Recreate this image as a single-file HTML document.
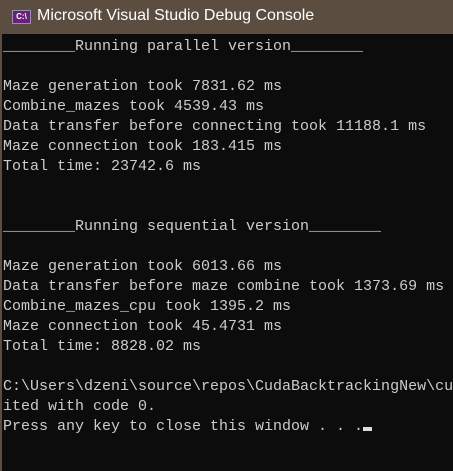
<!DOCTYPE html>
<html><head><style>
html,body{margin:0;padding:0;width:453px;height:471px;overflow:hidden;background:#0c0c0c}
.title{position:absolute;left:0;top:0;width:453px;height:34px;background:#5b4e41}
.title span{position:absolute;left:37px;top:7px;color:#fff;font:16px "Liberation Sans",sans-serif}
.icon{position:absolute;left:12px;top:10px;width:19px;height:14px;background:#68217a;border:1px solid #9b8fb0;box-sizing:border-box;color:#fff;font:bold 8px "Liberation Sans",sans-serif;text-align:center;line-height:12px}
.lb{position:absolute;left:0;top:34px;width:2px;height:437px;background:#5b4e41}
pre{position:absolute;left:3px;top:37px;margin:0;color:#cccccc;font:15px/20px "Liberation Mono",monospace;white-space:pre}
.cur{display:inline-block;width:9px;height:4px;background:#ddd;vertical-align:-1px}
</style></head><body>
<div class="title"><div class="icon">C:\</div><span>Microsoft Visual Studio Debug Console</span></div>
<div class="lb"></div>
<pre>________Running parallel version________

Maze generation took 7831.62 ms
Combine_mazes took 4539.43 ms
Data transfer before connecting took 11188.1 ms
Maze connection took 183.415 ms
Total time: 23742.6 ms


________Running sequential version________

Maze generation took 6013.66 ms
Data transfer before maze combine took 1373.69 ms
Combine_mazes_cpu took 1395.2 ms
Maze connection took 45.4731 ms
Total time: 8828.02 ms

C:\Users\dzeni\source\repos\CudaBacktrackingNew\cu
ited with code 0.
Press any key to close this window . . .<span class="cur"></span></pre>
</body></html>
